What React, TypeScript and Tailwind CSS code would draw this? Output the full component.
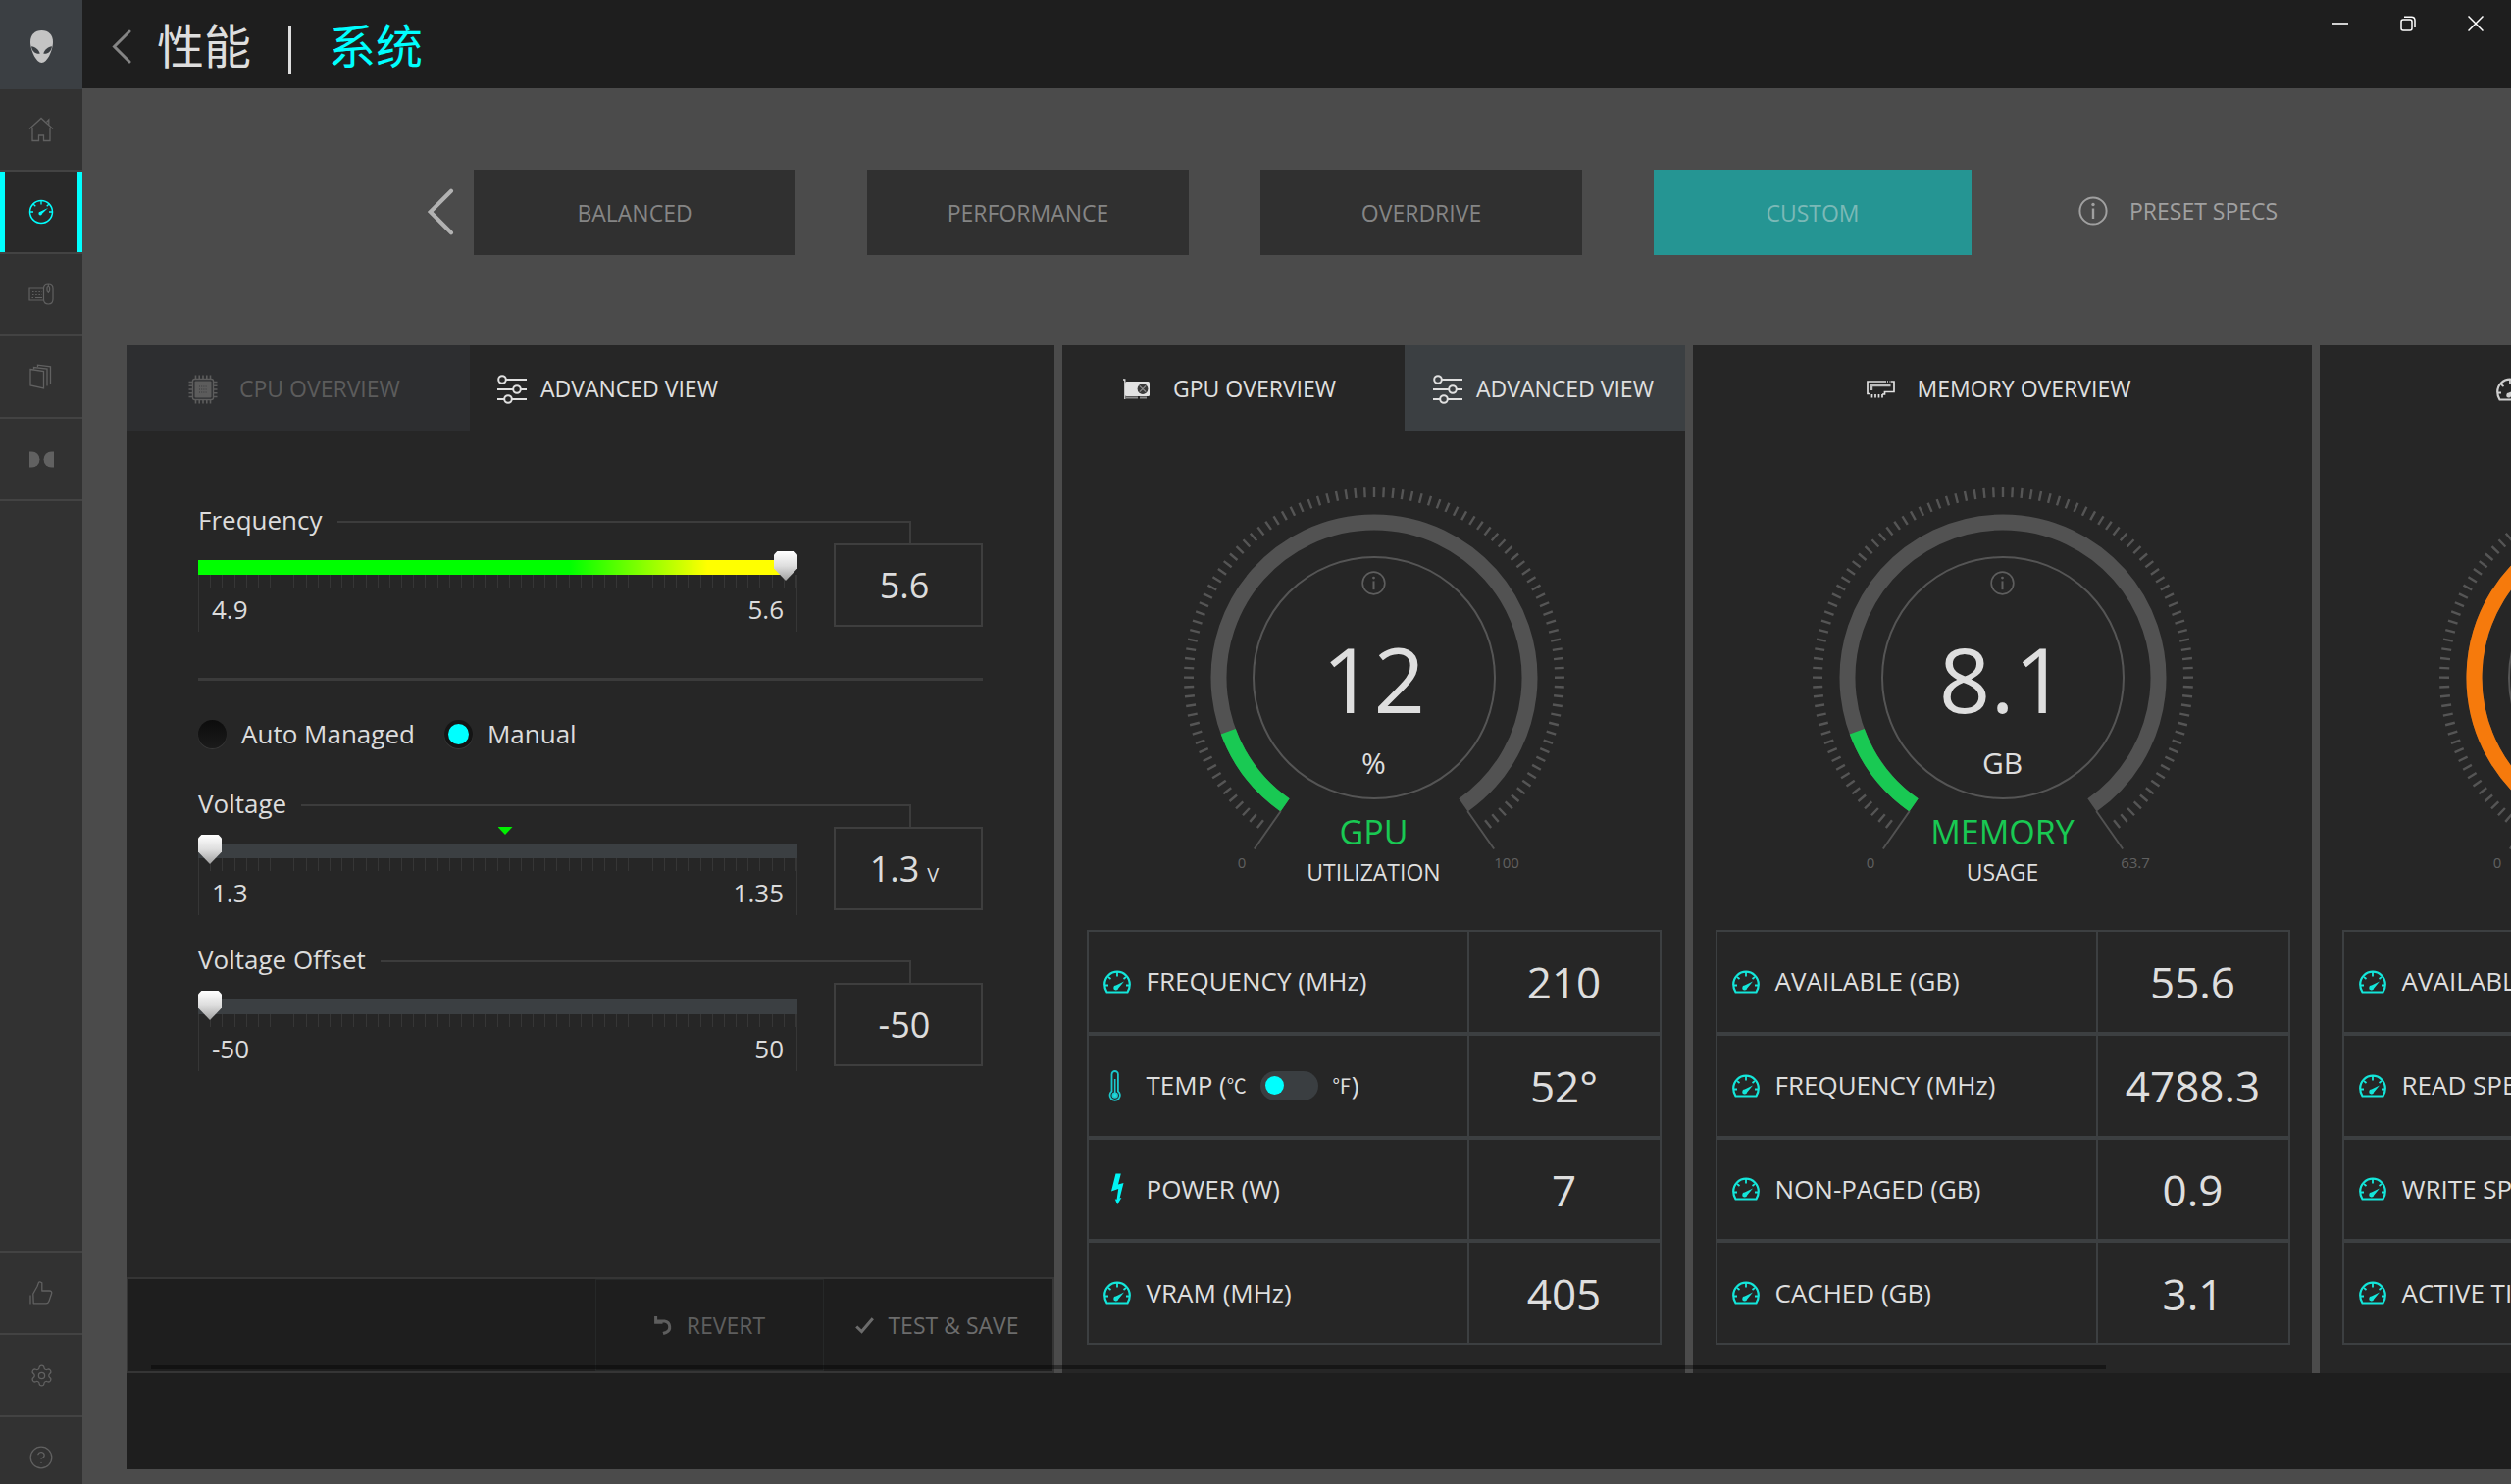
import React, { useId, useState } from 'react';
import { CircleHelp, Settings } from 'lucide-react';

interface IconProps {
    className?: string;
}

interface Metric {
    label: React.ReactNode;
    value: string;
    icon: React.ReactNode;
}

/* ---------- Icons ---------- */

function AlienIcon() {
    return (
        <svg width="23" height="33" viewBox="0 0 23 33" fill="none">
            <path d="M11.5 0C18.5 0 23 4.5 23 11.5C23 20.5 17 33 11.5 33C6 33 0 20.5 0 11.5C0 4.5 4.5 0 11.5 0Z" fill="#c4c4c4" />
            <path d="M1 16.2C5 16.8 9 19.6 9.6 23.8C5.2 24.4 1.6 21.2 1 16.2Z" fill="#3b3f43" />
            <path d="M22 16.2C18 16.8 14 19.6 13.4 23.8C17.8 24.4 21.4 21.2 22 16.2Z" fill="#3b3f43" />
        </svg>
    );
}

function HomeIcon() {
    return (
        <svg width="26" height="26" viewBox="0 0 26 26" fill="none" stroke="currentColor" strokeWidth="1.3">
            <path d="M1 12.5L13 1.5L25 12.5" />
            <path d="M4 12V24.5H10.5V19H15.5V24.5H22V12" />
            <path d="M18.5 5.5L20.8 3V8.5" />
        </svg>
    );
}

function SpeedIcon() {
    return (
        <svg width="26" height="26" viewBox="0 0 26 26" fill="none" stroke="currentColor" strokeWidth="1.5">
            <circle cx="13" cy="13" r="11.5" />
            <path d="M13 2V5.5M2 13H5M21 13H24M5.2 5.2L7.3 7.3M20.8 5.2L18.7 7.3" strokeWidth="1.3" />
            <path d="M20 9L14 14.8A1.8 1.8 0 1 1 12 12.8Z" fill="currentColor" stroke="none" />
        </svg>
    );
}

function PeripheralsIcon() {
    return (
        <svg width="26" height="22" viewBox="0 0 26 22" fill="none" stroke="currentColor" strokeWidth="1.2">
            <path d="M15 5H1V17H15" />
            <path d="M4 8.5H14M4 11.5H14" strokeDasharray="1.5 1.7" />
            <path d="M3.5 14.5H5M7 14.5H14" />
            <path d="M15.5 5.5Q15.5 1 20.3 1Q25 1 25 5.5V16Q25 21 20.3 21Q15.5 21 15.5 16Z" />
            <path d="M20.3 1V3.5M20.3 8.5V10" />
            <rect x="19" y="3.5" width="2.6" height="5" rx="1.3" />
        </svg>
    );
}

function LibraryIcon() {
    return (
        <svg width="24" height="26" viewBox="0 0 24 26" fill="none" stroke="currentColor" strokeWidth="1.3">
            <path d="M1 5.5L14.5 7.5V25L1 22Z" />
            <path d="M4.5 5.5V3.5L18 5V22.5" />
            <path d="M8.5 3.2V1.2L21.5 2.8V20.5" />
        </svg>
    );
}

function DolbyIcon() {
    return (
        <svg width="25" height="17" viewBox="0 0 25 17" fill="currentColor">
            <path d="M0 0.5H2.5A8 8 0 0 1 2.5 16.5H0Z" />
            <path d="M25 0.5H22.5A8 8 0 0 0 22.5 16.5H25Z" />
        </svg>
    );
}

function ThumbIcon() {
    return (
        <svg width="24" height="24" viewBox="0 0 24 24" fill="none" stroke="currentColor" strokeWidth="1.3" strokeLinejoin="round">
            <path d="M4.2 22.8L3.8 13L8 5.5L9.5 1.4Q10.3 0.4 12.8 1.8V10H20.5Q23 10 22.7 12.5L20 20.5Q19.2 22.8 17 22.8Z" />
            <path d="M1 14.5V23.5" />
        </svg>
    );
}

function ChevronLeft({ className = '', weight = 3 }: IconProps & { weight?: number }) {
    return (
        <svg viewBox="0 0 20 35" fill="none" className={className} stroke="currentColor" strokeWidth={weight} strokeLinecap="round">
            <path d="M18 2L2.5 17.5L18 33" />
        </svg>
    );
}

function InfoIcon({ className = '' }: IconProps) {
    return (
        <svg viewBox="0 0 30 30" fill="none" className={className} stroke="currentColor" strokeWidth="2">
            <circle cx="15" cy="15" r="13.6" />
            <path d="M15 12.5V23" strokeWidth="2.4" />
            <circle cx="15" cy="8.5" r="1.7" fill="currentColor" stroke="none" />
        </svg>
    );
}

function ChipIcon() {
    const pins = [7.5, 11.2, 15, 18.8, 22.5];
    return (
        <svg width="30" height="30" viewBox="0 0 30 30" fill="none" stroke="currentColor">
            {pins.map((p) => (
                <path key={p} d={`M${p} 0.5V4M${p} 26V29.5M0.5 ${p}H4M26 ${p}H29.5`} strokeWidth="1.6" />
            ))}
            <rect x="4.5" y="4.5" width="21" height="21" rx="2" strokeWidth="1.4" />
            <rect x="6.5" y="6.5" width="17" height="17" rx="1" fill="currentColor" stroke="none" />
            <path d="M11 12H19M11 15H19M11 18H19" stroke="#3a3b3d" strokeWidth="1" strokeDasharray="1 1.2" />
        </svg>
    );
}

function SlidersIcon() {
    return (
        <svg width="30" height="30" viewBox="0 0 30 30" fill="none" stroke="currentColor" strokeWidth="2">
            <path d="M9 5H30M0 15H16M24 15H30M0 25H7M15 25H30" />
            <circle cx="5" cy="5" r="3.8" />
            <circle cx="20" cy="15" r="3.8" />
            <circle cx="11" cy="25" r="3.8" />
        </svg>
    );
}

function GpuIcon() {
    return (
        <svg width="28" height="22" viewBox="0 0 28 22">
            <path d="M0 1H1.8V21" stroke="#dcdcdc" strokeWidth="1.3" fill="none" />
            <rect x="2" y="3" width="25" height="15" rx="1.5" fill="#e2e2e2" />
            <path d="M3 19.5H15M17 19.5H24" stroke="#8a8a8a" strokeWidth="1.8" />
            <circle cx="20" cy="10.5" r="5.4" fill="#3a3a3a" />
            <path d="M16.8 7.3L23.2 13.7M23.2 7.3L16.8 13.7" stroke="#909090" strokeWidth="1.2" />
        </svg>
    );
}

function RamIcon() {
    return (
        <svg width="29" height="18" viewBox="0 0 29 18" fill="none" stroke="currentColor" strokeWidth="1.7">
            <path d="M3.5 13.5H1V1H20M24.5 1H28V11.5H18.5V14H16" />
            <path d="M21 1H23.5" strokeDasharray="1 1" />
            <path d="M5 10V5H24.5" strokeWidth="2.4" stroke="#bdbdbd" />
            <path d="M5.5 14V17.5M9 14V17.5M12.5 14V17.5M16 14V17.5" />
        </svg>
    );
}

function DialIcon({ className = 'text-[#14e6da]' }: IconProps) {
    return (
        <svg width="28" height="24" viewBox="0 0 28 24" fill="none" className={className} stroke="currentColor" strokeWidth="2.2">
            <path d="M3.5 22.5Q1.2 19 1.2 14.5A12.8 12.8 0 0 1 26.8 14.5Q26.8 19 24.5 22.5Z" />
            <path d="M14 2V6.5M2 15.5H5M23 15.5H26M5 7L7.5 9M23 7L20.5 9" strokeWidth="1.8" />
            <path d="M21 11.5L15.2 18.5A2.5 2.5 0 1 1 12.8 15.6Z" fill="currentColor" stroke="none" />
        </svg>
    );
}

function ThermometerIcon() {
    return (
        <svg width="28" height="32" viewBox="0 0 28 32" fill="none" stroke="#1bc9cc" strokeWidth="1.8">
            <path d="M8.5 21.5V4.2A3.2 3.2 0 0 1 14.9 4.2V21.5A5.2 5.2 0 1 1 8.5 21.5Z" />
            <path d="M11.7 9V24" strokeWidth="1.6" />
            <circle cx="11.7" cy="25.6" r="2.3" fill="#22dede" />
        </svg>
    );
}

function BoltIcon() {
    return (
        <svg width="28" height="32" viewBox="0 0 28 32" fill="#00f5f5">
            <path d="M12.5 0.5H17.8L15 11.5L20.5 10L16.6 25.5L18.4 25L14.2 32L11.8 26.5L13.6 26.8L15.2 16L8 18.5Z" />
        </svg>
    );
}

/* ---------- Chrome ---------- */

function SidebarItem({ label, active = false, children }: { label: string; active?: boolean; children: React.ReactNode }) {
    return (
        <button
            aria-label={label}
            className={`flex h-[84px] w-full shrink-0 items-center justify-center border-b-2 border-[#434343] ${
                active ? 'bg-[#292929] text-[#00ffff] shadow-[inset_5px_0_#00ffff,inset_-5px_0_#00ffff]' : 'text-[#616161]'
            }`}
        >
            {children}
        </button>
    );
}

function Sidebar() {
    return (
        <nav className="flex w-[84px] shrink-0 flex-col bg-[#323232]">
            <div className="flex h-[91px] shrink-0 items-center justify-center bg-[#3b3f43] pt-1">
                <AlienIcon />
            </div>
            <SidebarItem label="Home"><HomeIcon /></SidebarItem>
            <SidebarItem label="Performance" active><SpeedIcon /></SidebarItem>
            <SidebarItem label="Peripherals"><PeripheralsIcon /></SidebarItem>
            <SidebarItem label="Library"><LibraryIcon /></SidebarItem>
            <SidebarItem label="Audio"><DolbyIcon /></SidebarItem>
            <div className="mt-auto h-[238px] shrink-0 border-t-2 border-[#434343]">
                <SidebarItem label="Feedback"><ThumbIcon /></SidebarItem>
                <SidebarItem label="Settings"><Settings size={25} strokeWidth={1.2} /></SidebarItem>
                <SidebarItem label="Help"><CircleHelp size={26} strokeWidth={1.2} /></SidebarItem>
            </div>
        </nav>
    );
}

function TopBar() {
    return (
        <header className="flex h-[90px] shrink-0 items-center bg-[#1e1e1e] pl-[30px]">
            <button aria-label="Back" className="mt-1 text-[#848484]">
                <ChevronLeft className="h-[35px] w-5" />
            </button>
            <h1 className="ml-[26px] flex items-center gap-[38px] pt-1 font-['Open_Sans','Noto_Sans_CJK_SC',sans-serif] text-[48px] leading-[72px]">
                <a href="#performance" className="text-[#dedede]">性能</a>
                <span className="mt-2 h-12 w-[3px] bg-[#dedede]" />
                <a href="#system" className="text-[#00ffff]">系统</a>
            </h1>
            <div className="mr-0.5 ml-auto flex self-start text-white">
                <button aria-label="Minimize" className="flex h-12 w-[69px] items-center justify-center">
                    <svg width="16" height="16" viewBox="0 0 16 16" stroke="currentColor" strokeWidth="1.6"><path d="M0 8H16" /></svg>
                </button>
                <button aria-label="Restore" className="flex h-12 w-[69px] items-center justify-center">
                    <svg width="16" height="16" viewBox="0 0 16 16" fill="none" stroke="currentColor" strokeWidth="1.5">
                        <rect x="1" y="4" width="11" height="11" rx="2" />
                        <path d="M4 1.2H11.5Q15 1.2 15 4.7V12" />
                    </svg>
                </button>
                <button aria-label="Close" className="flex h-12 w-[69px] items-center justify-center">
                    <svg width="16" height="16" viewBox="0 0 16 16" stroke="currentColor" strokeWidth="1.5"><path d="M0.5 0.5L15.5 15.5M15.5 0.5L0.5 15.5" /></svg>
                </button>
            </div>
        </header>
    );
}

const presets = ['BALANCED', 'PERFORMANCE', 'OVERDRIVE', 'CUSTOM'];

function PresetBar() {
    const [selected, setSelected] = useState('CUSTOM');

    return (
        <section className="flex shrink-0 items-center pt-[83px] pb-[92px] pl-[351px] text-[23px]">
            <button aria-label="Previous preset" className="mr-5 pb-0.5 text-[#b2b2b2]">
                <ChevronLeft className="h-12 w-7" />
            </button>
            <div className="flex gap-[73px]">
                {presets.map((name) => (
                    <button
                        key={name}
                        onClick={() => setSelected(name)}
                        className={`h-[87px] pt-0.5 ${
                            name === selected ? 'w-[324px] bg-[#259593] text-[#7bb9b7]' : 'w-[328px] bg-[#303030] text-[#858585]'
                        }`}
                    >
                        {name}
                    </button>
                ))}
            </div>
            <button className="ml-[109px] flex items-center gap-[22px] pb-[3px] text-[#a0a0a0]">
                <InfoIcon className="size-[30px]" />
                PRESET SPECS
            </button>
        </section>
    );
}

/* ---------- Overclocking controls ---------- */

interface SliderBlockProps {
    label: string;
    min: number;
    max: number;
    step: number;
    initial: number;
    unit?: string;
    marker?: boolean;
    gradient?: boolean;
}

function SliderBlock({ label, min, max, step, initial, unit, marker = false, gradient = false }: SliderBlockProps) {
    const [value, setValue] = useState(initial);
    const id = useId();

    return (
        <div className="text-[26px] text-[#dcdcdc]">
            <div className="flex h-[42px] items-start">
                <label htmlFor={id} className="leading-9">{label}</label>
                <div className="mt-[19px] mr-[73px] ml-[15px] h-[23px] flex-1 border-t-2 border-r-2 border-[#3c3c3c]" />
            </div>
            <div className="flex items-start gap-[37px]">
                <div className="relative flex-1 pt-[17px]">
                    {marker && (
                        <div className="absolute top-0 left-1/2 h-2 w-[15px] bg-[#00f000] [clip-path:polygon(0_0,100%_0,50%_100%)]" />
                    )}
                    <input
                        id={id}
                        type="range"
                        min={min}
                        max={max}
                        step={step}
                        value={value}
                        onChange={(e) => setValue(Number(e.target.value))}
                        className={`block h-[15px] w-full appearance-none [&::-webkit-slider-thumb]:-mt-[9px] [&::-webkit-slider-thumb]:h-[30px] [&::-webkit-slider-thumb]:w-6 [&::-webkit-slider-thumb]:appearance-none [&::-webkit-slider-thumb]:bg-[linear-gradient(#ffffff,#dedede_50%,#a0a0a0)] [&::-webkit-slider-thumb]:[clip-path:polygon(14%_0,86%_0,100%_12%,100%_58%,50%_100%,0_58%,0_12%)] [&::-webkit-slider-runnable-track]:h-[15px] ${
                            gradient
                                ? 'bg-[linear-gradient(90deg,#00ff00_62%,#ffff00_85%,#ffff00_98%,transparent_98%)]'
                                : 'bg-[#3b3f42]'
                        }`}
                    />
                    <div className="h-[58px] border-x border-[#363636]">
                        <div className="h-[13px] bg-[repeating-linear-gradient(90deg,transparent_0,transparent_calc(2%-1px),#363636_calc(2%-1px),#363636_2%)]" />
                        <div className="flex justify-between px-[13px] pt-1 leading-9">
                            <span>{min}</span>
                            <span>{max}</span>
                        </div>
                    </div>
                </div>
                <div className="flex h-[85px] w-[152px] items-baseline justify-center border-2 border-[#3e3e3e] pr-2">
                    <input
                        aria-label={`${label} value`}
                        value={value}
                        onChange={(e) => setValue(Number(e.target.value))}
                        className="field-sizing-content h-[81px] min-w-0 bg-transparent text-center text-[36px]"
                    />
                    {unit && <span className="ml-2 text-[20px]">{unit}</span>}
                </div>
            </div>
        </div>
    );
}

function Radio({ name, label, defaultChecked = false }: { name: string; label: string; defaultChecked?: boolean }) {
    return (
        <label className="flex items-center gap-[15px]">
            <input
                type="radio"
                name={name}
                defaultChecked={defaultChecked}
                className="size-[29px] appearance-none rounded-full border-[#141414] bg-[linear-gradient(#0c0c0c,#1b1b1b)] shadow-[0_1px_1px_#3c3c3c] checked:border-4 checked:bg-none checked:bg-[#00ffff]"
            />
            {label}
        </label>
    );
}

const tabClass = 'flex h-[87px] items-center pt-0.5 text-[23px]';

function CpuPanel() {
    return (
        <section className="flex w-[946px] shrink-0 flex-col bg-[#262626]">
            <div className="flex">
                <button className={`${tabClass} w-[350px] gap-[22px] bg-[#2d2e30] pl-[63px] text-[#5c5c5c]`}>
                    <ChipIcon />
                    CPU OVERVIEW
                </button>
                <button className={`${tabClass} gap-[14px] pl-7 text-[#e0e0e0]`}>
                    <SlidersIcon />
                    ADVANCED VIEW
                </button>
            </div>
            <div className="px-[73px] pt-[73px]">
                <SliderBlock label="Frequency" min={4.9} max={5.6} step={0.1} initial={5.6} gradient />
                <hr className="mt-[47px] h-[3px] border-0 bg-[#3b3b3b]" />
                <fieldset className="mt-9 mb-[35px] flex gap-[30px] text-[26px] leading-9 text-[#dcdcdc]">
                    <Radio name="voltage-mode" label="Auto Managed" />
                    <Radio name="voltage-mode" label="Manual" defaultChecked />
                </fieldset>
                <SliderBlock label="Voltage" min={1.3} max={1.35} step={0.01} initial={1.3} unit="V" marker />
                <div className="h-[27px]" />
                <SliderBlock label="Voltage Offset" min={-50} max={50} step={1} initial={-50} />
            </div>
            <div className="mt-auto flex h-[98px] justify-end border-2 border-[#353535] bg-[#1e1e1e] text-[23px]">
                <button className="flex w-[233px] items-center justify-center gap-[14px] border border-[#262828] text-[#5e5e5e]">
                    <svg width="19" height="19" viewBox="0 0 19 19" fill="none" stroke="currentColor" strokeWidth="3">
                        <path d="M2.5 5H10.5A6 6 0 0 1 12 16.5L9 17.5" />
                        <path d="M1.6 0V6.2H8.5" />
                    </svg>
                    REVERT
                </button>
                <button className="flex w-[233px] items-center justify-center gap-[14px] pr-0.5 text-[#6c6c6c]">
                    <svg width="19" height="17" viewBox="0 0 19 17" fill="none" stroke="currentColor" strokeWidth="3">
                        <path d="M1.2 9.5L6.5 14.5L17.8 1.2" />
                    </svg>
                    TEST &amp; SAVE
                </button>
            </div>
        </section>
    );
}

/* ---------- Gauges ---------- */

const CX = 215;
const CY = 201;
const START = 35;
const SWEEP = 290;

// angle is measured clockwise from straight down
function polar(radius: number, angle: number) {
    const rad = (angle * Math.PI) / 180;
    return `${(CX - radius * Math.sin(rad)).toFixed(2)} ${(CY + radius * Math.cos(rad)).toFixed(2)}`;
}

function arc(radius: number, from: number, to: number) {
    return `M${polar(radius, from)}A${radius} ${radius} 0 ${to - from > 180 ? 1 : 0} 1 ${polar(radius, to)}`;
}

interface GaugeProps {
    percent: number;
    value: string;
    unit: string;
    title: string;
    subtitle: string;
    max: string;
    color: string;
}

function Gauge({ percent, value, unit, title, subtitle, max, color }: GaugeProps) {
    const valueAngle = START + (SWEEP * percent) / 100;
    const ticks = Array.from({ length: 99 }, (_, i) => START + (SWEEP * (i + 1)) / 100);

    return (
        <div className="relative mx-auto mt-[51px] h-[420px] w-[430px]">
            <svg width="430" height="420" viewBox="0 0 430 420" fill="none">
                <path d={ticks.map((a) => `M${polar(184, a)}L${polar(194, a)}`).join('')} stroke="#555555" strokeWidth="2.4" />
                <path d={arc(158.5, START, START + SWEEP)} stroke="#525252" strokeWidth="16" />
                <path d={arc(158.5, START, valueAngle)} stroke={color} strokeWidth="16" />
                <path d={`M${polar(166, START)}L${polar(213, START)}M${polar(166, START + SWEEP)}L${polar(213, START + SWEEP)}`} stroke="#525252" strokeWidth="2" />
                <circle cx={CX} cy={CY} r="123" stroke="#555555" strokeWidth="2" />
                <text x={CX - 135} y="395" textAnchor="middle" fontSize="15" fill="#606060">0</text>
                <text x={CX + 135} y="395" textAnchor="middle" fontSize="15" fill="#606060">{max}</text>
            </svg>
            <div className="absolute inset-0 flex flex-col items-center pt-[92px] text-[#dedede]">
                <button aria-label={`About ${title}`} className="text-[#5e5e5e]">
                    <InfoIcon className="size-[25px]" />
                </button>
                <span className="mt-[39px] text-[92px] leading-none">{value}</span>
                <span className="mt-[25px] text-[30px] leading-none">{unit}</span>
                <span className="mt-[38px] text-[34px] leading-none" style={{ color }}>{title}</span>
                <span className="mt-[13px] text-[23px] leading-none">{subtitle}</span>
            </div>
        </div>
    );
}

function MetricTable({ rows, label }: { rows: Metric[]; label: string }) {
    return (
        <table aria-label={label} className="mx-auto mt-[38px] mb-[29px] h-[423px] w-[586px] border-separate border-spacing-0 text-[#dedede]">
            <tbody>
                {rows.map((row, i) => (
                    <tr key={i}>
                        <th scope="row" className="border-2 border-[#3c3f41] p-0 pl-[15px] text-left text-[26px] font-normal whitespace-nowrap">
                            <div className="flex items-center gap-4">
                                {row.icon}
                                <span className="flex items-center">{row.label}</span>
                            </div>
                        </th>
                        <td className="w-[196px] border-2 border-l-0 border-[#3c3f41] p-0 pt-px text-center text-[44px] leading-none">
                            {row.value}
                        </td>
                    </tr>
                ))}
            </tbody>
        </table>
    );
}

function TempLabel() {
    return (
        <>
            TEMP (
            <span className="font-['Noto_Sans_CJK_SC',sans-serif] text-[20px]">℃</span>
            <input
                type="checkbox"
                role="switch"
                aria-label="Show temperature in Fahrenheit"
                className="mx-[14px] flex h-[30px] w-[59px] appearance-none items-center rounded-full bg-[#3a3e41] px-[5px] before:size-[19px] before:rounded-full before:bg-[#00ffff] checked:justify-end"
            />
            <span className="font-['Noto_Sans_CJK_SC',sans-serif] text-[20px]">℉</span>)
        </>
    );
}

const gpuMetrics: Metric[] = [
    { label: 'FREQUENCY (MHz)', value: '210', icon: <DialIcon /> },
    { label: <TempLabel />, value: '52°', icon: <ThermometerIcon /> },
    { label: 'POWER (W)', value: '7', icon: <BoltIcon /> },
    { label: 'VRAM (MHz)', value: '405', icon: <DialIcon /> },
];

const memoryMetrics: Metric[] = [
    { label: 'AVAILABLE (GB)', value: '55.6', icon: <DialIcon /> },
    { label: 'FREQUENCY (MHz)', value: '4788.3', icon: <DialIcon /> },
    { label: 'NON-PAGED (GB)', value: '0.9', icon: <DialIcon /> },
    { label: 'CACHED (GB)', value: '3.1', icon: <DialIcon /> },
];

const storageMetrics: Metric[] = [
    { label: 'AVAILABLE (GB)', value: '412', icon: <DialIcon /> },
    { label: 'READ SPEED (MB/s)', value: '0', icon: <DialIcon /> },
    { label: 'WRITE SPEED (MB/s)', value: '0', icon: <DialIcon /> },
    { label: 'ACTIVE TIME (%)', value: '0', icon: <DialIcon /> },
];

const panelClass = 'shrink-0 bg-[#262626]';

export default function App() {
    return (
        <div className="flex h-screen overflow-hidden bg-[#4b4b4b] font-['Open_Sans','Noto_Sans_CJK_SC',sans-serif]">
            <Sidebar />
            <div className="flex min-w-0 flex-1 flex-col">
                <TopBar />
                <PresetBar />
                <main className="flex min-h-0 flex-1 flex-col pb-[15px] pl-[45px]">
                    <div className="relative flex shrink-0 gap-2 overflow-hidden">
                        <CpuPanel />

                        <section className={`${panelClass} w-[635px]`}>
                            <div className="flex text-[#e0e0e0]">
                                <button className={`${tabClass} flex-1 gap-[23px] pl-[62px]`}>
                                    <GpuIcon />
                                    GPU OVERVIEW
                                </button>
                                <button className={`${tabClass} w-[286px] gap-[14px] bg-[#3b3f42] pl-[29px]`}>
                                    <SlidersIcon />
                                    ADVANCED VIEW
                                </button>
                            </div>
                            <Gauge percent={12} value="12" unit="%" title="GPU" subtitle="UTILIZATION" max="100" color="#19c953" />
                            <MetricTable rows={gpuMetrics} label="GPU metrics" />
                        </section>

                        <section className={`${panelClass} w-[631px]`}>
                            <h2 className={`${tabClass} justify-center gap-[23px] pr-2 text-[#e0e0e0]`}>
                                <RamIcon />
                                MEMORY OVERVIEW
                            </h2>
                            <Gauge percent={12} value="8.1" unit="GB" title="MEMORY" subtitle="USAGE" max="63.7" color="#19c953" />
                            <MetricTable rows={memoryMetrics} label="Memory metrics" />
                        </section>

                        <section className={`${panelClass} w-[631px]`}>
                            <h2 className={`${tabClass} justify-center gap-[23px] text-[#e0e0e0]`}>
                                <DialIcon className="text-[#cfcfcf]" />
                                STORAGE OVERVIEW
                            </h2>
                            <Gauge percent={78} value="78" unit="%" title="STORAGE" subtitle="USAGE" max="100" color="#f67a0c" />
                            <MetricTable rows={storageMetrics} label="Storage metrics" />
                        </section>

                        {/* horizontal scroll thumb */}
                        <div className="absolute bottom-1 left-[25px] h-1 w-[82%] bg-black/40" />
                    </div>
                    <footer className="flex-1 bg-[#1e1e1e]" />
                </main>
            </div>
        </div>
    );
}
